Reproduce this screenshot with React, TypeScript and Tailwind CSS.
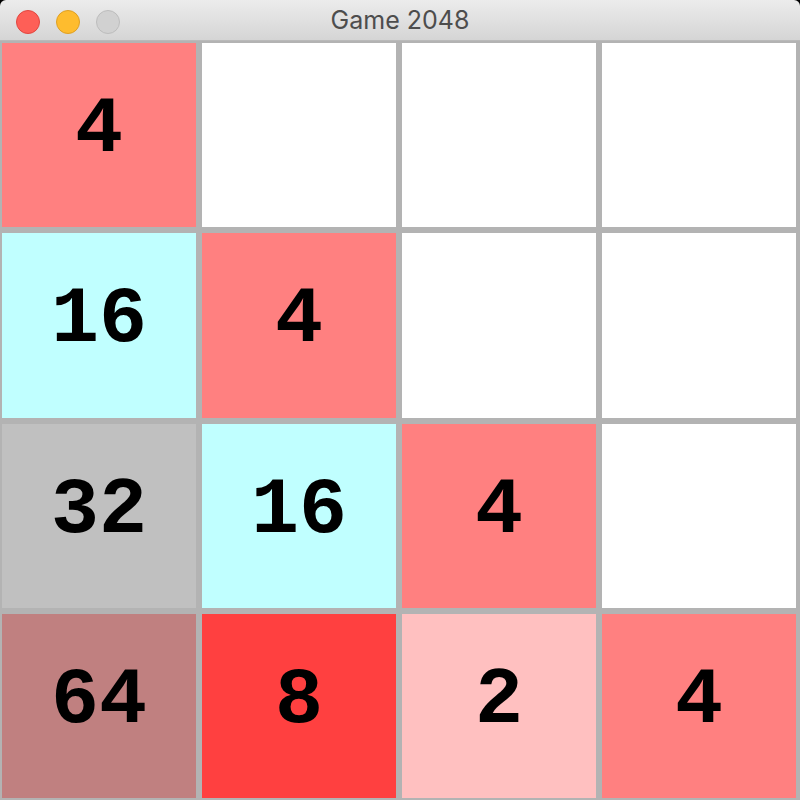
import React from "react";

const board: number[][] = [
  [4, 0, 0, 0],
  [16, 4, 0, 0],
  [32, 16, 4, 0],
  [64, 8, 2, 4],
];

function tileClass(v: number): string {
  switch (v) {
    case 2:
      return "bg-[#ffc0c0]";
    case 4:
      return "bg-[#ff8080]";
    case 8:
      return "bg-[#ff4040]";
    case 16:
      return "bg-[#c0ffff]";
    case 32:
      return "bg-[#c0c0c0]";
    case 64:
      return "bg-[#c08080]";
    default:
      return "bg-white";
  }
}

export default function App() {
  return (
    <div className="w-[800px] h-[800px] bg-black flex flex-col overflow-hidden">
      <div className="h-[41px] rounded-t-[6px] bg-gradient-to-b from-[#ececec] to-[#d5d5d5] border-b border-[#b9b9b9] relative flex items-center justify-center">
        <div className="absolute left-[16px] top-[10px] flex gap-[16px]">
          <div className="w-[24px] h-[24px] rounded-full bg-[#fe5f57] border border-[#e2463f]" />
          <div className="w-[24px] h-[24px] rounded-full bg-[#febc2e] border border-[#dfa023]" />
          <div className="w-[24px] h-[24px] rounded-full bg-[#d1d1d1] border border-[#bdbdbd]" />
        </div>
        <span
          className="text-[25px] text-[#4d4d4d] leading-none"
          style={{ fontFamily: "Inter, 'Liberation Sans', sans-serif" }}
        >
          Game 2048
        </span>
      </div>
      <div className="flex-1 bg-[#b3b3b3] pl-[2px] pr-[4px] pt-[2px] pb-[2px] grid grid-cols-4 grid-rows-4 gap-[6px]">
        {board.flat().map((v, i) => (
          <div
            key={i}
            className={`${tileClass(v)} flex items-center justify-center pb-[10px]`}
          >
            {v !== 0 && (
              <span
                className="text-[80px] font-bold text-black leading-none"
                style={{ fontFamily: "'Liberation Mono', 'Courier New', monospace" }}
              >
                {v}
              </span>
            )}
          </div>
        ))}
      </div>
    </div>
  );
}
